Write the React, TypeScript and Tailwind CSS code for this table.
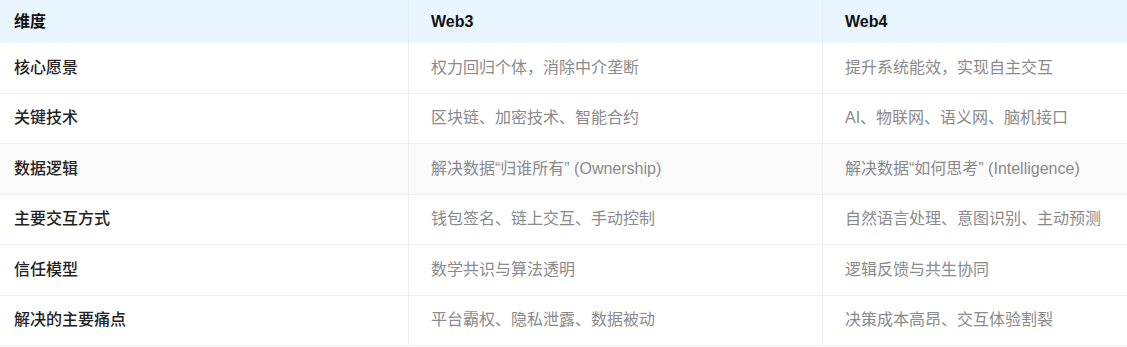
import React from "react";

const rows: [string, string, string][] = [
  ["核心愿景", "权力回归个体，消除中介垄断", "提升系统能效，实现自主交互"],
  ["关键技术", "区块链、加密技术、智能合约", "AI、物联网、语义网、脑机接口"],
  ["数据逻辑", "解决数据“归谁所有” (Ownership)", "解决数据“如何思考” (Intelligence)"],
  ["主要交互方式", "钱包签名、链上交互、手动控制", "自然语言处理、意图识别、主动预测"],
  ["信任模型", "数学共识与算法透明", "逻辑反馈与共生协同"],
  ["解决的主要痛点", "平台霸权、隐私泄露、数据被动", "决策成本高昂、交互体验割裂"],
];

const font = { fontFamily: '"Liberation Sans", Arial, "Noto Sans CJK SC", sans-serif' };

export default function App() {
  return (
    <div className="w-[1127px] h-[347px] bg-white overflow-hidden text-[16px]" style={font}>
      <div className="grid grid-cols-[408px_414px_1fr] h-[43px] bg-[#e9f5ff] items-stretch">
        <div className="flex items-center pl-[14px] font-bold text-[#111]">维度</div>
        <div className="flex items-center pl-[22px] font-bold text-[#111] border-l border-[#e3edf7]">Web3</div>
        <div className="flex items-center pl-[22px] font-bold text-[#111] border-l border-[#e3edf7]">Web4</div>
      </div>
      {rows.map((r, i) => (
        <div
          key={i}
          className={`grid grid-cols-[408px_414px_1fr] h-[50.5px] border-b border-[#efefef] ${i === 2 ? "bg-[#fafafa]" : "bg-white"}`}
        >
          <div className="flex items-center pl-[14px] font-medium text-[#222]">{r[0]}</div>
          <div className="flex items-center pl-[22px] text-[#8a8a8a] border-l border-[#efefef]">{r[1]}</div>
          <div className="flex items-center pl-[22px] text-[#8a8a8a] border-l border-[#efefef]">{r[2]}</div>
        </div>
      ))}
    </div>
  );
}
